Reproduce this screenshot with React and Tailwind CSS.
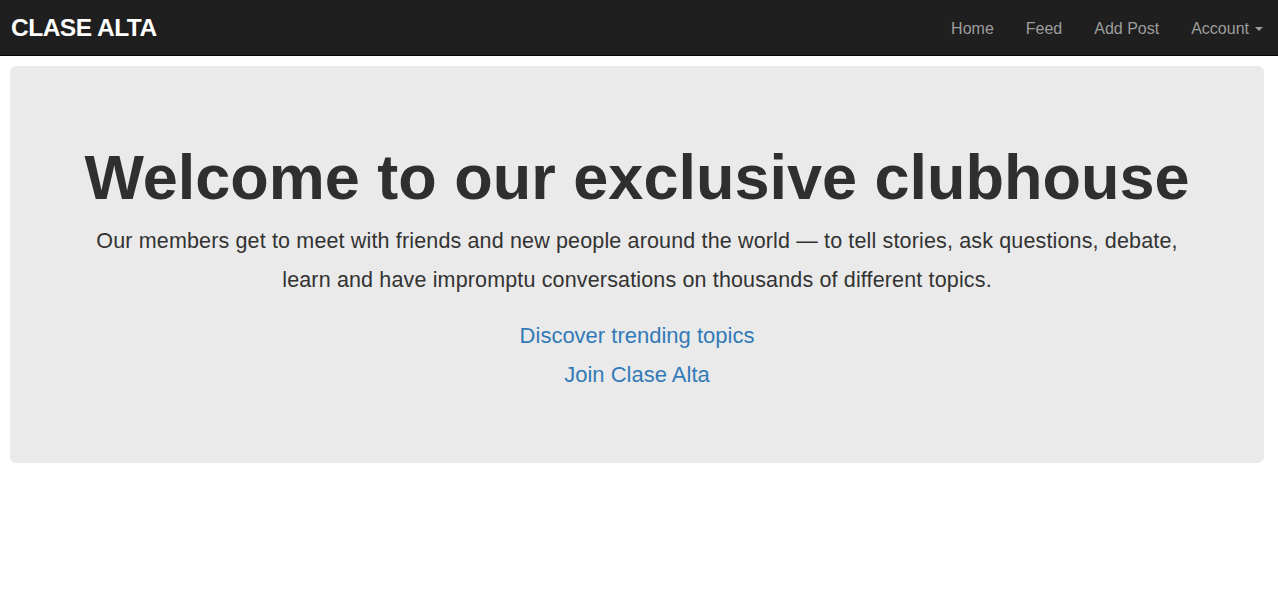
export default function App() {
  const font = { fontFamily: '"Liberation Sans", Arial, sans-serif' };
  return (
    <div className="min-h-[609px] bg-white" style={font}>
      <nav className="h-[56px] bg-[#1f1f1f] border-b border-[#080808] flex items-center justify-between">
        <a className="pl-[11px] pt-[1px] text-white font-bold text-[24.5px] tracking-[-0.5px] leading-none">CLASE ALTA</a>
        <ul className="flex items-center pr-[15px] pt-[2px] text-[16px] text-[#9d9d9d]">
          <li className="px-[16px]">Home</li>
          <li className="px-[16px]">Feed</li>
          <li className="px-[16px]">Add Post</li>
          <li className="pl-[16px] flex items-center">
            Account
            <span className="ml-[6px] inline-block w-0 h-0 border-l-[4px] border-r-[4px] border-t-[4px] border-l-transparent border-r-transparent border-t-[#9d9d9d]"></span>
          </li>
        </ul>
      </nav>
      <div className="mt-[10px] ml-[10px] mr-[14px] h-[397px] rounded-[6px] bg-[#eaeaea] flex flex-col items-center pt-[71px] text-center">
        <h1 className="text-[63px] font-bold text-[#2f2f2f] leading-[80px]">Welcome to our exclusive clubhouse</h1>
        <p className="mt-[5px] text-[21.5px] tracking-[0.15px] text-[#333] leading-[39px] font-light max-w-[1100px]">
          Our members get to meet with friends and new people around the world — to tell stories, ask questions, debate, learn and have impromptu conversations on thousands of different topics.
        </p>
        <div className="mt-[16px] flex flex-col items-center text-[22px] text-[#337ab7] leading-[39px] font-light">
          <a>Discover trending topics</a>
          <a>Join Clase Alta</a>
        </div>
      </div>
    </div>
  );
}
